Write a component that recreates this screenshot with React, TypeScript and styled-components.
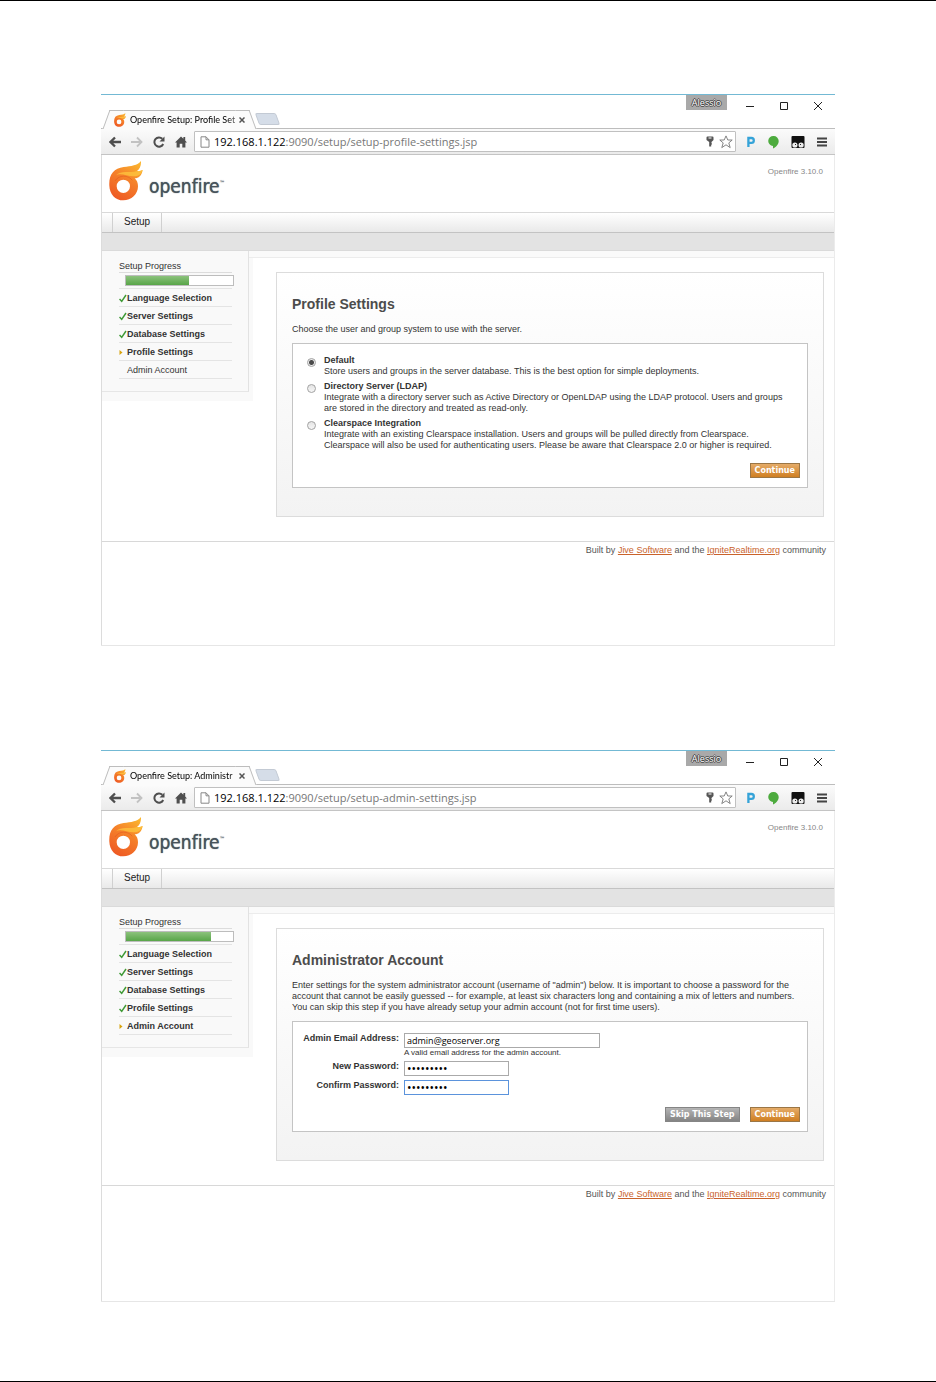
import React, { useId, useState } from "react";
import styled, { createGlobalStyle } from "styled-components";

const sans = '"Liberation Sans", Arial, sans-serif';
const ui = '"Open Sans", "Noto Sans", sans-serif';

const GlobalStyle = createGlobalStyle`
  *, *::before, *::after { box-sizing: border-box; }
  body { margin: 0; background: #fff; font-family: ${sans}; font-size: 9px; line-height: 11px; color: #333; }
  h1, p, ul { margin: 0; padding: 0; }
  button, input { font: inherit; margin: 0; }
`;

const Page = styled.main`
  display: flex;
  flex-direction: column;
  gap: 104px;
  padding: 93px 101px 79px;
  border-top: 1px solid #000;
  border-bottom: 1px solid #000;
`;

const Browser = styled.section`
  display: flex;
  flex-direction: column;
  min-height: 552px;
  border-top: 1px solid #73b9d4;
  border-bottom: 1px solid #e6e6e6;
`;

const TitleBar = styled.div`
  display: flex;
  justify-content: space-between;
  height: 33px;
`;

const Tabs = styled.div`
  display: flex;
  align-items: flex-end;
  padding-left: 9px;
`;

const Tab = styled.div`
  position: relative;
  z-index: 1;
  display: flex;
  align-items: center;
  width: 139px;
  height: 19px;
  margin-bottom: -1px;
  padding: 0 4px;
  border-top: 1px solid #bdbdbd;
  background: #fbfbfb;
  &::before, &::after {
    content: "";
    position: absolute;
    z-index: -1;
    top: -1px;
    bottom: 0;
    width: 14px;
    background: #fbfbfb;
    border-top: 1px solid #bdbdbd;
  }
  &::before { left: -4px; transform: skewX(-20deg); border-left: 1px solid #bdbdbd; }
  &::after { right: -4px; transform: skewX(20deg); border-right: 1px solid #bdbdbd; }
`;

const TabTitle = styled.span`
  flex: 1;
  margin-left: 4px;
  white-space: nowrap;
  font: 9px/14px Lato, ${ui};
  color: #000;
  mask-image: linear-gradient(90deg, #000 90%, #0005);
`;

const BareButton = styled.button`
  display: inline-flex;
  align-items: center;
  justify-content: center;
  padding: 0;
  border: 0;
  background: none;
  color: #555;
`;

const NewTab = styled(BareButton)`
  width: 21px;
  height: 12px;
  margin: 0 0 3px 8px;
  border: 1px solid #c3cad4;
  border-radius: 2px;
  background: #d5dde8;
  transform: skewX(20deg);
`;

const WindowControls = styled.div`
  display: flex;
  align-items: flex-start;
  padding-right: 12px;
`;

const UserBadge = styled(BareButton)`
  width: 41px;
  height: 15px;
  margin-right: 18px;
  background: #a9a9a9;
  color: #fff;
  font: 9px/14px ${ui};
  text-shadow: 1px 0 #444, -1px 0 #444, 0 1px #444, 0 -1px #444;
`;

const WindowButton = styled(BareButton)`
  width: 10px;
  height: 22px;
  color: #222;
  & + & { margin-left: 24px; }
`;

const Toolbar = styled.div`
  display: flex;
  align-items: center;
  height: 27px;
  padding: 0 8px;
  border-top: 1px solid #bdbdbd;
  border-bottom: 1px solid #c4c4c4;
  background: linear-gradient(#fbfbfb, #ebebeb);
`;

const ToolGroup = styled.div<{ $gap: number }>`
  display: flex;
  align-items: center;
  gap: ${(p) => p.$gap}px;
`;

const AddressBar = styled.div`
  flex: 1;
  display: flex;
  align-items: center;
  height: 21px;
  margin: 0 10px 0 7px;
  padding: 0 2px 0 5px;
  border: 1px solid #c0c0c0;
  border-radius: 1px;
  background: #fff;
`;

const Address = styled.span`
  flex: 1;
  margin-left: 4px;
  font: 11px/16px ${ui};
  color: #777;
  b { font-weight: 400; color: #000; }
`;

const Site = styled.div`
  flex: 1;
  border-left: 1px solid #dcdcdc;
  border-right: 1px solid #ebebeb;
`;

const Header = styled.header`
  display: flex;
  justify-content: space-between;
  height: 57px;
  padding: 6px 11px 0 7px;
`;

const Brand = styled.div`
  display: flex;
  align-items: flex-start;
`;

const BrandName = styled.span`
  margin: 13px 0 0 6px;
  font: 19px/24px "DejaVu Sans Condensed", "DejaVu Sans", sans-serif;
  font-stretch: condensed;
  font-variant-ligatures: none;
  color: #47535b;
  text-shadow: 0 0 1px #47535b;
  sup { font-size: 6px; line-height: 6px; vertical-align: 8px; }
`;

const Version = styled.span`
  padding-top: 5px;
  font-size: 8px;
  color: #888;
`;

const Nav = styled.nav`
  display: flex;
  height: 21px;
  padding-left: 10px;
  border-top: 1px solid #d9d9d9;
  border-bottom: 1px solid #c3c3c3;
  background: linear-gradient(#fff, #e9e9e9);
`;

const NavLink = styled.a`
  padding: 0 11px;
  border-left: 1px solid #d0d0d0;
  border-right: 1px solid #d0d0d0;
  font: 10px/18px ${sans};
  color: #222;
  text-decoration: none;
`;

const SubNav = styled.div`
  height: 18px;
  background: #e3e3e3;
  border-bottom: 1px solid #dadada;
`;

const Body = styled.div`
  display: flex;
  align-items: flex-start;
`;

const SidebarShade = styled.aside`
  flex: none;
  width: 151px;
  padding: 0 4px 9px 0;
  background: #f9f9f9;
`;

const Sidebar = styled.div`
  padding: 10px 16px 12px 17px;
  border-right: 1px solid #e2e2e2;
  border-bottom: 1px solid #e6e6e6;
`;

const SidebarTitle = styled.p`
  border-bottom: 1px solid #dcdcdc;
`;

const ProgressTrack = styled.div`
  height: 11px;
  margin: 2px -2px 2px 6px;
  border: 1px solid #bdbdbd;
  background: #fff;
`;

const ProgressFill = styled.div`
  height: 9px;
  background: linear-gradient(#8cc27c, #58a548);
`;

const Steps = styled.ul`
  list-style: none;
  border-top: 1px solid #e4e4e4;
`;

const Step = styled.li<{ $bold: boolean }>`
  display: flex;
  align-items: center;
  height: 18px;
  padding-top: 2px;
  border-bottom: 1px solid #e4e4e4;
  font-weight: ${(p) => (p.$bold ? 700 : 400)};
  white-space: nowrap;
  svg { flex: none; }
`;

const Content = styled.div`
  flex: 1;
  min-width: 0;
`;

const Shade = styled.div`
  height: 7px;
  margin-left: -4px;
  background: #fafafa;
  border-bottom: 1px solid #ececec;
`;

const Panel = styled.div`
  margin: 14px 10px 0 23px;
  padding: 22px 15px 28px;
  border: 1px solid #dcdcdc;
  background: linear-gradient(#fff, #f3f3f3);
`;

const Heading = styled.h1`
  font-size: 14px;
  line-height: 18px;
  color: #4c4c4c;
`;

const Intro = styled.p`
  margin: 11px 0 8px;
`;

const Box = styled.form`
  padding: 11px 7px 9px 10px;
  border: 1px solid #c4c4c4;
  background: #fff;
`;

const Option = styled.label`
  display: flex;
  gap: 8px;
  margin: 0 0 4px 4px;
  b { display: block; }
`;

const Radio = styled.input`
  appearance: none;
  flex: none;
  width: 9px;
  height: 9px;
  margin-top: 3px;
  border: 1px solid #a2a2a2;
  border-radius: 50%;
  background: linear-gradient(#e4e4e4, #f6f6f6);
  &:checked { background: radial-gradient(circle, #4a4a4a 2px, #ececec 3px); }
`;

const Actions = styled.div`
  display: flex;
  justify-content: flex-end;
  gap: 10px;
  margin-top: 12px;
`;

const ActionButton = styled.button<{ $muted?: boolean }>`
  height: 15px;
  padding: 0 4px;
  border: 1px solid ${(p) => (p.$muted ? "#858585" : "#9b7645")};
  background: ${(p) => (p.$muted ? "linear-gradient(#b4b4b4, #848484)" : "linear-gradient(#e4ab68, #d07f22)")};
  color: #fff;
  font: 700 8px/12px "DejaVu Sans", Verdana, sans-serif;
`;

const Fields = styled.div`
  display: grid;
  grid-template-columns: 96px 1fr;
  column-gap: 5px;
  row-gap: 4px;
`;

const FieldLabel = styled.label`
  font-weight: 700;
  text-align: right;
  white-space: nowrap;
`;

const TextInput = styled.input<{ $wide?: boolean }>`
  display: block;
  width: ${(p) => (p.$wide ? 196 : 105)}px;
  height: 15px;
  padding: 0 2px;
  border: 1px solid #aaa;
  border-radius: 0;
  outline: 0;
  background: #fff;
  color: #000;
  font: 9px/13px ${ui};
  &[type="password"] { font-size: 12px; }
  &[data-active="true"] { border-color: #5b93dc; }
`;

const Hint = styled.small`
  display: block;
  font-size: 8px;
  line-height: 9px;
`;

const Footer = styled.footer`
  margin-top: 24px;
  padding: 3px 8px 0 0;
  border-top: 1px solid #d8d8d8;
  text-align: right;
  color: #555;
  a { color: #c9622b; }
`;

function Flame({ size }: { size: number }) {
  const id = useId();
  return (
    <svg width={size} height={(size * 40) / 34} viewBox="0 0 102 120" aria-hidden="true">
      <defs>
        <linearGradient id={id} x1="0.8" y1="0" x2="0.3" y2="1">
          <stop offset="0" stopColor="#fbb62f" />
          <stop offset="0.45" stopColor="#f5822a" />
          <stop offset="1" stopColor="#ee5a24" />
        </linearGradient>
      </defs>
      <path
        fill={`url(#${id})`}
        fillRule="evenodd"
        d="M1 74C-1 42 14 22 44 18C66 15 86 14 96 0C97 14 92 24 84 30C90 31 96 30 101 27C98 44 89 52 77 52C84 58 87 66 87 76C87 100 67 118 43 118C18 118 2 99 1 74ZM43 56A20 20 0 1 0 43 96A20 20 0 1 0 43 56Z"
      />
      <path fill="#fdc63f" opacity="0.75" d="M20 44C36 26 62 38 84 30C90 31 96 30 101 27C97 40 88 46 74 46C52 46 34 34 20 44Z" />
      <path fill="none" stroke="#dd4f1e" strokeOpacity="0.45" strokeWidth="3" d="M18 60C30 40 58 42 70 58" />
    </svg>
  );
}

const Check = () => (
  <svg width="8" height="9" viewBox="0 0 8 9" aria-hidden="true">
    <path d="M.5 5L2.7 7.3L7 1" fill="none" stroke="#3f9a36" strokeWidth="1.5" />
  </svg>
);

const Arrow = () => (
  <svg width="8" height="9" viewBox="0 0 8 9" aria-hidden="true">
    <path d="M.5 2L3.5 4.5L.5 7Z" fill="#d8a30c" />
  </svg>
);

const Blank = () => <svg width="8" height="9" aria-hidden="true" />;

const BackIcon = ({ color, flip }: { color: string; flip?: boolean }) => (
  <svg width="12" height="12" viewBox="0 0 12 12" aria-hidden="true">
    <path
      d={flip ? "M0 6H10M6 1.5L10.5 6L6 10.5" : "M12 6H2M6 1.5L1.5 6L6 10.5"}
      fill="none"
      stroke={color}
      strokeWidth={flip ? 1.8 : 2.3}
    />
  </svg>
);

const ReloadIcon = () => (
  <svg width="12" height="12" viewBox="0 0 12 12" aria-hidden="true">
    <path d="M10.2 8A4.6 4.6 0 1 1 9.3 2.8" fill="none" stroke="#4e4e4e" strokeWidth="2" />
    <path d="M11.5 .5V5.5H6.5Z" fill="#4e4e4e" />
  </svg>
);

const HomeIcon = () => (
  <svg width="12" height="12" viewBox="0 0 12 12" aria-hidden="true">
    <path d="M6 .5L8.4 2.8V1H10.2V4.5L12 6.4H10.4V11.5H7.3V7.7H4.7V11.5H1.6V6.4H0Z" fill="#4e4e4e" />
  </svg>
);

const PageIcon = () => (
  <svg width="10" height="12" viewBox="0 0 10 12" aria-hidden="true">
    <path d="M1 .8H6L9 3.8V11.2H1ZM6 .8V3.8H9" fill="#fff" stroke="#888" />
  </svg>
);

const KeyIcon = () => (
  <svg width="8" height="11" viewBox="0 0 8 11" aria-hidden="true">
    <path d="M.5 1.5Q.5 .5 1.5 .5H6.5Q7.5 .5 7.5 1.5V4L5.5 6V7L6 8L5.2 9V10.5H3.2V6L.5 4Z" fill="#555" />
    <path d="M2.5 2H5.5" stroke="#fff" />
  </svg>
);

const StarIcon = () => (
  <svg width="14" height="14" viewBox="0 0 14 14" aria-hidden="true">
    <path d="M7 .9L8.8 5H13.2L9.8 7.9L11.2 12.6L7 9.8L2.8 12.6L4.2 7.9L.8 5H5.2Z" fill="#fff" stroke="#777" strokeWidth=".9" />
  </svg>
);

const ParkingIcon = () => (
  <svg width="10" height="12" viewBox="0 0 10 12" aria-hidden="true">
    <path d="M2.4 11V2H5.4Q7.8 2 7.8 4.4Q7.8 6.8 5.4 6.8H2.4" fill="none" stroke="#35a3d8" strokeWidth="2.3" />
  </svg>
);

const BalloonIcon = () => (
  <svg width="11" height="14" viewBox="0 0 11 14" aria-hidden="true">
    <path d="M5.5 1A5 5 0 0 1 10.7 6C10.7 9.5 8 12 5 13.5V11A5 5 0 0 1 5.5 1Z" fill="#4dab3e" />
  </svg>
);

const MonkeyIcon = () => (
  <svg width="14" height="14" viewBox="0 0 14 14" aria-hidden="true">
    <rect x=".5" y="1" width="13" height="12" rx="1" fill="#111" />
    <circle cx="3.9" cy="10" r="2.6" fill="#eee" />
    <circle cx="10.1" cy="10" r="2.6" fill="#eee" />
    <path d="M4 9.5H5M9 9.5H10" stroke="#222" />
  </svg>
);

const MenuIcon = () => (
  <svg width="10" height="10" viewBox="0 0 10 10" aria-hidden="true">
    <path d="M0 1.5H10M0 5H10M0 8.5H10" stroke="#444" strokeWidth="2" />
  </svg>
);

const CloseTabIcon = () => (
  <svg width="6" height="6" viewBox="0 0 6 6" aria-hidden="true">
    <path d="M.5 .5L5.5 5.5M5.5 .5L.5 5.5" stroke="#555" strokeWidth="1.5" />
  </svg>
);

const controlPaths = {
  Minimize: "M1 5.5H9",
  Maximize: "M1.5 1.5H8.5V8.5H1.5Z",
  Close: "M1 1L9 9M9 1L1 9",
};

const steps = ["Language Selection", "Server Settings", "Database Settings", "Profile Settings", "Admin Account"];

interface WindowProps {
  title: string;
  path: string;
  current: number;
  progress: number;
  children: React.ReactNode;
}

function SetupWindow({ title, path, current, progress, children }: WindowProps) {
  return (
    <Browser>
      <TitleBar>
        <Tabs>
          <Tab>
            <Flame size={12} />
            <TabTitle>{title}</TabTitle>
            <BareButton aria-label="Close tab"><CloseTabIcon /></BareButton>
          </Tab>
          <NewTab aria-label="New tab" />
        </Tabs>
        <WindowControls>
          <UserBadge>Alessio</UserBadge>
          {Object.entries(controlPaths).map(([name, d]) => (
            <WindowButton key={name} aria-label={name}>
              <svg width="10" height="10" viewBox="0 0 10 10" aria-hidden="true">
                <path d={d} fill="none" stroke="currentColor" />
              </svg>
            </WindowButton>
          ))}
        </WindowControls>
      </TitleBar>
      <Toolbar>
        <ToolGroup $gap={10}>
          <BareButton aria-label="Back"><BackIcon color="#4e4e4e" /></BareButton>
          <BareButton aria-label="Forward"><BackIcon color="#c2c2c2" flip /></BareButton>
          <BareButton aria-label="Reload"><ReloadIcon /></BareButton>
          <BareButton aria-label="Home"><HomeIcon /></BareButton>
        </ToolGroup>
        <AddressBar>
          <PageIcon />
          <Address><b>192.168.1.122</b>:9090/setup/{path}</Address>
          <ToolGroup $gap={5}>
            <BareButton aria-label="Saved password"><KeyIcon /></BareButton>
            <BareButton aria-label="Bookmark"><StarIcon /></BareButton>
          </ToolGroup>
        </AddressBar>
        <ToolGroup $gap={12}>
          <BareButton aria-label="Parking extension"><ParkingIcon /></BareButton>
          <BareButton aria-label="Chat extension"><BalloonIcon /></BareButton>
          <BareButton aria-label="Script extension"><MonkeyIcon /></BareButton>
          <BareButton aria-label="Menu"><MenuIcon /></BareButton>
        </ToolGroup>
      </Toolbar>
      <Site>
        <Header>
          <Brand>
            <Flame size={34} />
            <BrandName>openfire<sup>™</sup></BrandName>
          </Brand>
          <Version>Openfire 3.10.0</Version>
        </Header>
        <Nav><NavLink href="#setup">Setup</NavLink></Nav>
        <SubNav />
        <Body>
          <SidebarShade>
            <Sidebar>
              <SidebarTitle>Setup Progress</SidebarTitle>
              <ProgressTrack><ProgressFill style={{ width: `${progress}%` }} /></ProgressTrack>
              <Steps>
                {steps.map((name, i) => (
                  <Step key={name} $bold={i <= current}>
                    {i < current ? <Check /> : i === current ? <Arrow /> : <Blank />}
                    {name}
                  </Step>
                ))}
              </Steps>
            </Sidebar>
          </SidebarShade>
          <Content>
            <Shade />
            <Panel>{children}</Panel>
          </Content>
        </Body>
        <Footer>
          Built by <a href="#jive">Jive Software</a> and the <a href="#ignite">IgniteRealtime.org</a> community
        </Footer>
      </Site>
    </Browser>
  );
}

const options = [
  {
    name: "Default",
    lines: ["Store users and groups in the server database. This is the best option for simple deployments."],
  },
  {
    name: "Directory Server (LDAP)",
    lines: [
      "Integrate with a directory server such as Active Directory or OpenLDAP using the LDAP protocol. Users and groups",
      "are stored in the directory and treated as read-only.",
    ],
  },
  {
    name: "Clearspace Integration",
    lines: [
      "Integrate with an existing Clearspace installation. Users and groups will be pulled directly from Clearspace.",
      "Clearspace will also be used for authenticating users. Please be aware that Clearspace 2.0 or higher is required.",
    ],
  },
];

const Lines = ({ lines }: { lines: string[] }) => (
  <>
    {lines.map((line, i) => (
      <React.Fragment key={line}>{i > 0 && <br />}{line}</React.Fragment>
    ))}
  </>
);

export default function App() {
  const [mode, setMode] = useState("Default");
  return (
    <>
      <GlobalStyle />
      <Page>
        <SetupWindow title="Openfire Setup: Profile Set" path="setup-profile-settings.jsp" current={3} progress={59}>
          <Heading>Profile Settings</Heading>
          <Intro>Choose the user and group system to use with the server.</Intro>
          <Box onSubmit={(e) => e.preventDefault()}>
            {options.map((o) => (
              <Option key={o.name}>
                <Radio type="radio" name="mode" checked={mode === o.name} onChange={() => setMode(o.name)} />
                <span><b>{o.name}</b><Lines lines={o.lines} /></span>
              </Option>
            ))}
            <Actions><ActionButton>Continue</ActionButton></Actions>
          </Box>
        </SetupWindow>
        <SetupWindow title="Openfire Setup: Administr" path="setup-admin-settings.jsp" current={4} progress={79}>
          <Heading>Administrator Account</Heading>
          <Intro>
            <Lines
              lines={[
                'Enter settings for the system administrator account (username of "admin") below. It is important to choose a password for the',
                "account that cannot be easily guessed -- for example, at least six characters long and containing a mix of letters and numbers.",
                "You can skip this step if you have already setup your admin account (not for first time users).",
              ]}
            />
          </Intro>
          <Box onSubmit={(e) => e.preventDefault()}>
            <Fields>
              <FieldLabel htmlFor="email">Admin Email Address:</FieldLabel>
              <div>
                <TextInput id="email" type="text" defaultValue="admin@geoserver.org" $wide />
                <Hint>A valid email address for the admin account.</Hint>
              </div>
              <FieldLabel htmlFor="password">New Password:</FieldLabel>
              <TextInput id="password" type="password" defaultValue="geoserver" />
              <FieldLabel htmlFor="confirm">Confirm Password:</FieldLabel>
              <TextInput id="confirm" type="password" defaultValue="geoserver" data-active="true" />
            </Fields>
            <Actions>
              <ActionButton type="button" $muted>Skip This Step</ActionButton>
              <ActionButton>Continue</ActionButton>
            </Actions>
          </Box>
        </SetupWindow>
      </Page>
    </>
  );
}
